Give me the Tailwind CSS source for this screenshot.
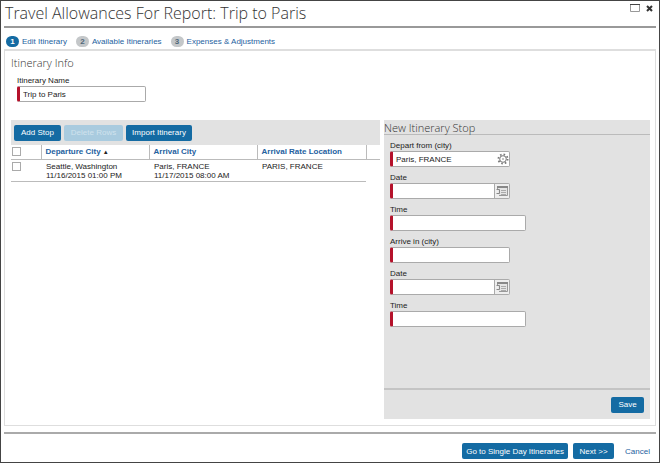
<!DOCTYPE html>
<html lang="en">
<head>
<meta charset="utf-8">
<meta name="viewport" content="width=device-width, initial-scale=1">
<title>Travel Allowances For Report: Trip to Paris</title>
<script src="https://cdn.jsdelivr.net/npm/@tailwindcss/browser@4"></script>
</head>
<body class="bg-white font-['Liberation_Sans',Arial,sans-serif] text-[8px] leading-[9px] text-[#222]">
<div class="flex min-h-screen flex-col border border-[#444] px-[3px]">
  <header class="flex h-[27px] items-start justify-between border-b-2 border-[#999] pl-px">
    <h1 class="font-['Open_Sans',sans-serif] text-[16px] leading-6 font-light text-[#333]">Travel Allowances For Report: Trip to Paris</h1>
    <div class="flex items-center gap-1.5 pt-[3px] pr-[3px]">
      <button type="button" aria-label="Maximize"><svg class="block" width="10" height="8" viewBox="0 0 10 8"><path d="M.5 1V7.5H9.5V1" fill="#fff" stroke="#999"/><path d="M0 .5H10" stroke="#444"/></svg></button>
      <button type="button" aria-label="Close"><svg class="block" width="7" height="7" viewBox="0 0 7 7"><path d="M1 1L6 6M6 1L1 6" stroke="#333" stroke-width="2"/></svg></button>
    </div>
  </header>

  <nav aria-label="Steps" class="flex h-[21px] items-center gap-[9px] pt-1.5 pl-0.5 text-[#2461a0]">
    <a href="#" class="flex items-center gap-[3px]" aria-current="step"><span class="flex h-[11px] w-[13px] items-center justify-center rounded-full bg-[#146ba3] font-bold text-white">1</span>Edit Itinerary</a>
    <a href="#" class="flex items-center gap-[3px]"><span class="flex h-[11px] w-[13px] items-center justify-center rounded-full bg-[#c4c7c9] font-bold text-[#50677a]">2</span>Available Itineraries</a>
    <a href="#" class="flex items-center gap-[3px]"><span class="flex h-[11px] w-[13px] items-center justify-center rounded-full bg-[#c4c7c9] font-bold text-[#50677a]">3</span>Expenses &amp; Adjustments</a>
  </nav>

  <main class="flex grow flex-col border border-t-2 border-[#dedede] pr-[5px] pb-1.5 pl-1.5">
    <h2 class="pt-1 font-['Open_Sans',sans-serif] text-[11px] leading-4 font-light text-[#333]">Itinerary Info</h2>
    <div class="mb-[18px] pt-[5px] pl-1.5">
      <label for="name" class="block leading-[10px]">Itinerary Name</label>
      <input id="name" type="text" value="Trip to Paris" class="block h-4 w-[129px] rounded-xs border border-l-3 border-[#aaa] border-l-[#b5122b] bg-white px-[3px]">
    </div>

    <div class="flex grow gap-1">
      <section aria-label="Stops" class="flex-[369]">
        <div class="flex h-[25px] items-center gap-[3px] bg-[#e2e2e2] px-[3px]">
          <button type="button" class="h-4 w-[47px] rounded-xs bg-[#146ba3] text-white">Add Stop</button>
          <button type="button" disabled class="h-4 w-[59px] rounded-xs bg-[#a9cbdf] text-[#d0e2ed]">Delete Rows</button>
          <button type="button" class="h-4 w-[66px] rounded-xs bg-[#146ba3] text-white">Import Itinerary</button>
        </div>
        <table class="w-full table-fixed border-collapse text-left">
          <colgroup><col class="w-[30px]"><col class="w-[108px]"><col class="w-[108px]"><col class="w-[109px]"><col></colgroup>
          <thead class="text-[#2461a0]">
            <tr class="h-[14px] border-b border-[#bbb]">
              <th class="pl-px"><input type="checkbox" aria-label="Select all stops" class="block size-[9px] appearance-none border border-[#aaa] bg-white"></th>
              <th class="border-l border-[#bbb] pl-1">Departure City <span class="text-[6px] text-[#222]">▲</span></th>
              <th class="border-l border-[#bbb] pl-1">Arrival City</th>
              <th class="border-l border-[#bbb] pl-1">Arrival Rate Location</th>
              <th class="border-l border-[#bbb]"></th>
            </tr>
          </thead>
          <tbody>
            <tr class="h-[22px] align-top">
              <td class="border-b border-[#bbb] pt-0.5 pl-px"><input type="checkbox" aria-label="Select Seattle to Paris" class="block size-[9px] appearance-none border border-[#aaa] bg-white"></td>
              <td class="border-b border-[#bbb] pt-0.5 pl-[5px]">Seattle, Washington<br>11/16/2015 01:00 PM</td>
              <td class="border-b border-[#bbb] pt-0.5 pl-[5px]">Paris, FRANCE<br>11/17/2015 08:00 AM</td>
              <td class="border-b border-[#bbb] pt-0.5 pl-[5px]">PARIS, FRANCE</td>
              <td></td>
            </tr>
          </tbody>
        </table>
      </section>

      <form class="flex flex-[266] flex-col bg-[#e2e2e2]">
        <h2 class="h-[15px] border-b border-[#bbb] font-['Open_Sans',sans-serif] text-[11px] leading-4 font-light text-[#333]">New Itinerary Stop</h2>
        <div class="flex grow flex-col gap-1.5 pt-1.5 pl-1.5">
          <div><label for="from" class="block leading-[10px]">Depart from (city)</label>
            <div class="flex h-4 w-[120px] items-center rounded-xs border border-l-3 border-[#aaa] border-l-[#b5122b] bg-white">
              <input id="from" type="text" value="Paris, FRANCE" class="h-full min-w-0 grow px-[3px]">
              <button type="button" aria-label="Look up city"><svg class="block" width="12" height="12" viewBox="0 0 12 12" fill="none" stroke="#777"><circle cx="6" cy="6" r="3.3"/><circle cx="6" cy="6" r="4.6" stroke-width="1.8" stroke-dasharray="1.6 2.013"/><circle cx="6" cy="6" r=".8" fill="#777" stroke="none"/></svg></button>
            </div></div>
          <div><label for="date1" class="block leading-[10px]">Date</label>
            <div class="flex h-4 w-[120px] rounded-xs border border-l-3 border-[#aaa] border-l-[#b5122b] bg-white">
              <input id="date1" type="text" class="h-full min-w-0 grow px-[3px]">
              <button type="button" aria-label="Pick departure date" class="flex w-[15px] shrink-0 items-center justify-center border-l border-[#aaa] bg-[#eee]"><svg width="12" height="10" viewBox="0 0 12 10"><path d="M1.500 3V.5H11.500V9.500H3" fill="#e4e4e4" stroke="#999"/><path d="M1 1H12" stroke="#888" stroke-width="2"/><path d="M5 4.500H10M5 6.500H10M5 8.500H10" stroke="#aaa"/><path d="M.5 3.500H3.500V7.500H.5" fill="none" stroke="#888"/></svg></button>
            </div></div>
          <div><label for="time1" class="block leading-[10px]">Time</label>
            <input id="time1" type="text" class="block h-4 w-[136px] rounded-xs border border-l-3 border-[#aaa] border-l-[#b5122b] bg-white px-[3px]"></div>
          <div><label for="to" class="block leading-[10px]">Arrive in (city)</label>
            <input id="to" type="text" class="block h-4 w-[120px] rounded-xs border border-l-3 border-[#aaa] border-l-[#b5122b] bg-white px-[3px]"></div>
          <div><label for="date2" class="block leading-[10px]">Date</label>
            <div class="flex h-4 w-[120px] rounded-xs border border-l-3 border-[#aaa] border-l-[#b5122b] bg-white">
              <input id="date2" type="text" class="h-full min-w-0 grow px-[3px]">
              <button type="button" aria-label="Pick arrival date" class="flex w-[15px] shrink-0 items-center justify-center border-l border-[#aaa] bg-[#eee]"><svg width="12" height="10" viewBox="0 0 12 10"><path d="M1.500 3V.5H11.500V9.500H3" fill="#e4e4e4" stroke="#999"/><path d="M1 1H12" stroke="#888" stroke-width="2"/><path d="M5 4.500H10M5 6.500H10M5 8.500H10" stroke="#aaa"/><path d="M.5 3.500H3.500V7.500H.5" fill="none" stroke="#888"/></svg></button>
            </div></div>
          <div><label for="time2" class="block leading-[10px]">Time</label>
            <input id="time2" type="text" class="block h-4 w-[136px] rounded-xs border border-l-3 border-[#aaa] border-l-[#b5122b] bg-white px-[3px]"></div>
        </div>
        <div class="flex h-[31px] items-center justify-end border-t-2 border-[#c4c4c4] pr-1.5">
          <button type="button" class="h-4 w-[33px] rounded-xs bg-[#146ba3] text-white">Save</button>
        </div>
      </form>
    </div>
  </main>

  <footer class="mt-1.5 flex h-[30px] items-center justify-end gap-[5px] border-t-2 border-[#aaa] pt-1.5 pr-1.5">
    <button type="button" class="h-4 w-[106px] rounded-xs bg-[#146ba3] text-white">Go to Single Day Itineraries</button>
    <button type="button" class="h-4 w-[41px] rounded-xs bg-[#146ba3] text-white">Next &gt;&gt;</button>
    <a href="#" class="ml-1.5 text-[#2461a0]">Cancel</a>
  </footer>
</div>
</body>
</html>
